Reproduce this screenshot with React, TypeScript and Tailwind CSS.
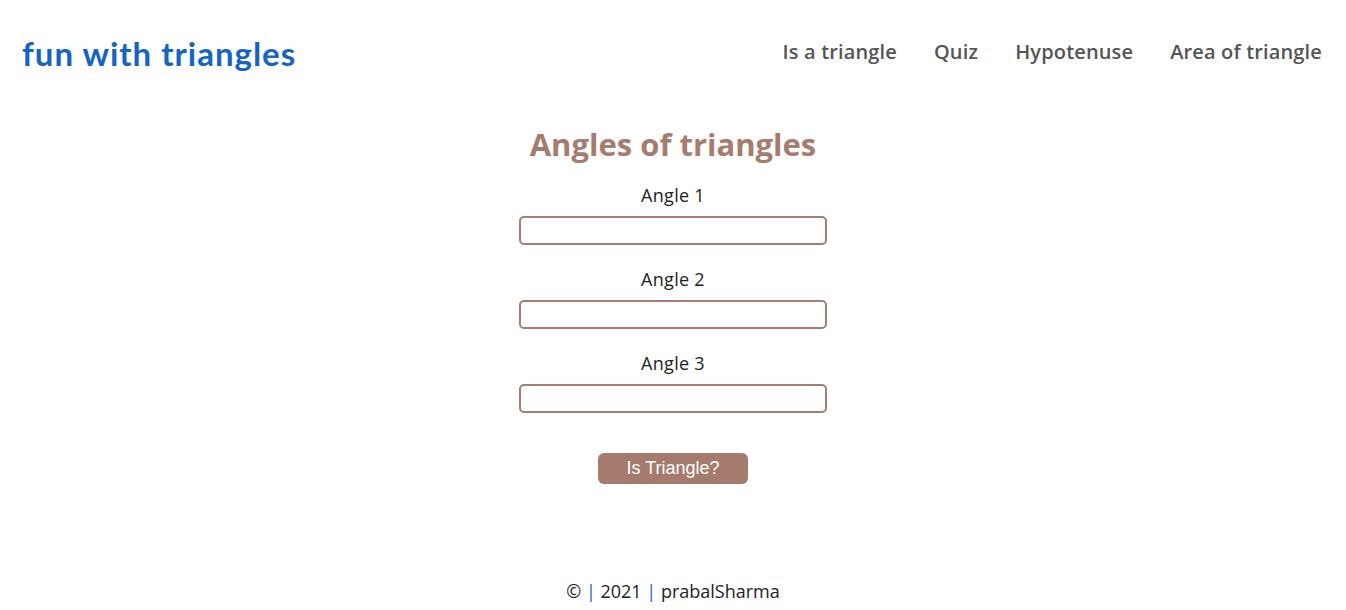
const navLinks = ["Is a triangle", "Quiz", "Hypotenuse", "Area of triangle"];

const AngleField = ({ label }: { label: string }) => {
  return (
    <div className="flex flex-col items-center">
      <label className="text-[18px] leading-[22px] text-[#222] tracking-[0.3px]">{label}</label>
      <input
        type="number"
        className="mt-[10px] w-[308px] h-[29px] rounded-[5px] border-2 border-[#a57d72] bg-white outline-none"
      />
    </div>
  );
};

export default function App() {
  return (
    <div className="min-h-[610px] bg-white flex flex-col font-['Open_Sans',sans-serif]">
      <header className="flex items-center justify-between pl-[22px] pr-[24px] h-[104px]">
        <h1 className="text-[33px] font-bold text-[#1565c0] font-['Comic_Sans_MS','Lato',sans-serif] tracking-[1px] pt-[4px]">
          fun with triangles
        </h1>
        <nav className="flex gap-[37px]">
          {navLinks.map((l) => (
            <a key={l} href="#" className="text-[20px] tracking-[0.15px] font-semibold text-[#555]">
              {l}
            </a>
          ))}
        </nav>
      </header>

      <main className="flex flex-col items-center">
        <h2 className="mt-[21px] text-[31px] leading-[38px] font-bold text-[#a67c6e]">
          Angles of triangles
        </h2>
        <div className="mt-[21px] flex flex-col gap-[23px]">
          <AngleField label="Angle 1" />
          <AngleField label="Angle 2" />
          <AngleField label="Angle 3" />
        </div>
        <button className="mt-[40px] w-[150px] h-[31px] rounded-[6px] bg-[#a57b6e] text-white text-[18px] font-['Liberation_Sans',sans-serif]">
          Is Triangle?
        </button>
      </main>

      <footer className="mt-auto pb-[5px] text-center text-[18px] text-[#222]">
        © <span className="text-[#1565c0]">|</span> 2021 <span className="text-[#1565c0]">|</span> prabalSharma
      </footer>
    </div>
  );
}
